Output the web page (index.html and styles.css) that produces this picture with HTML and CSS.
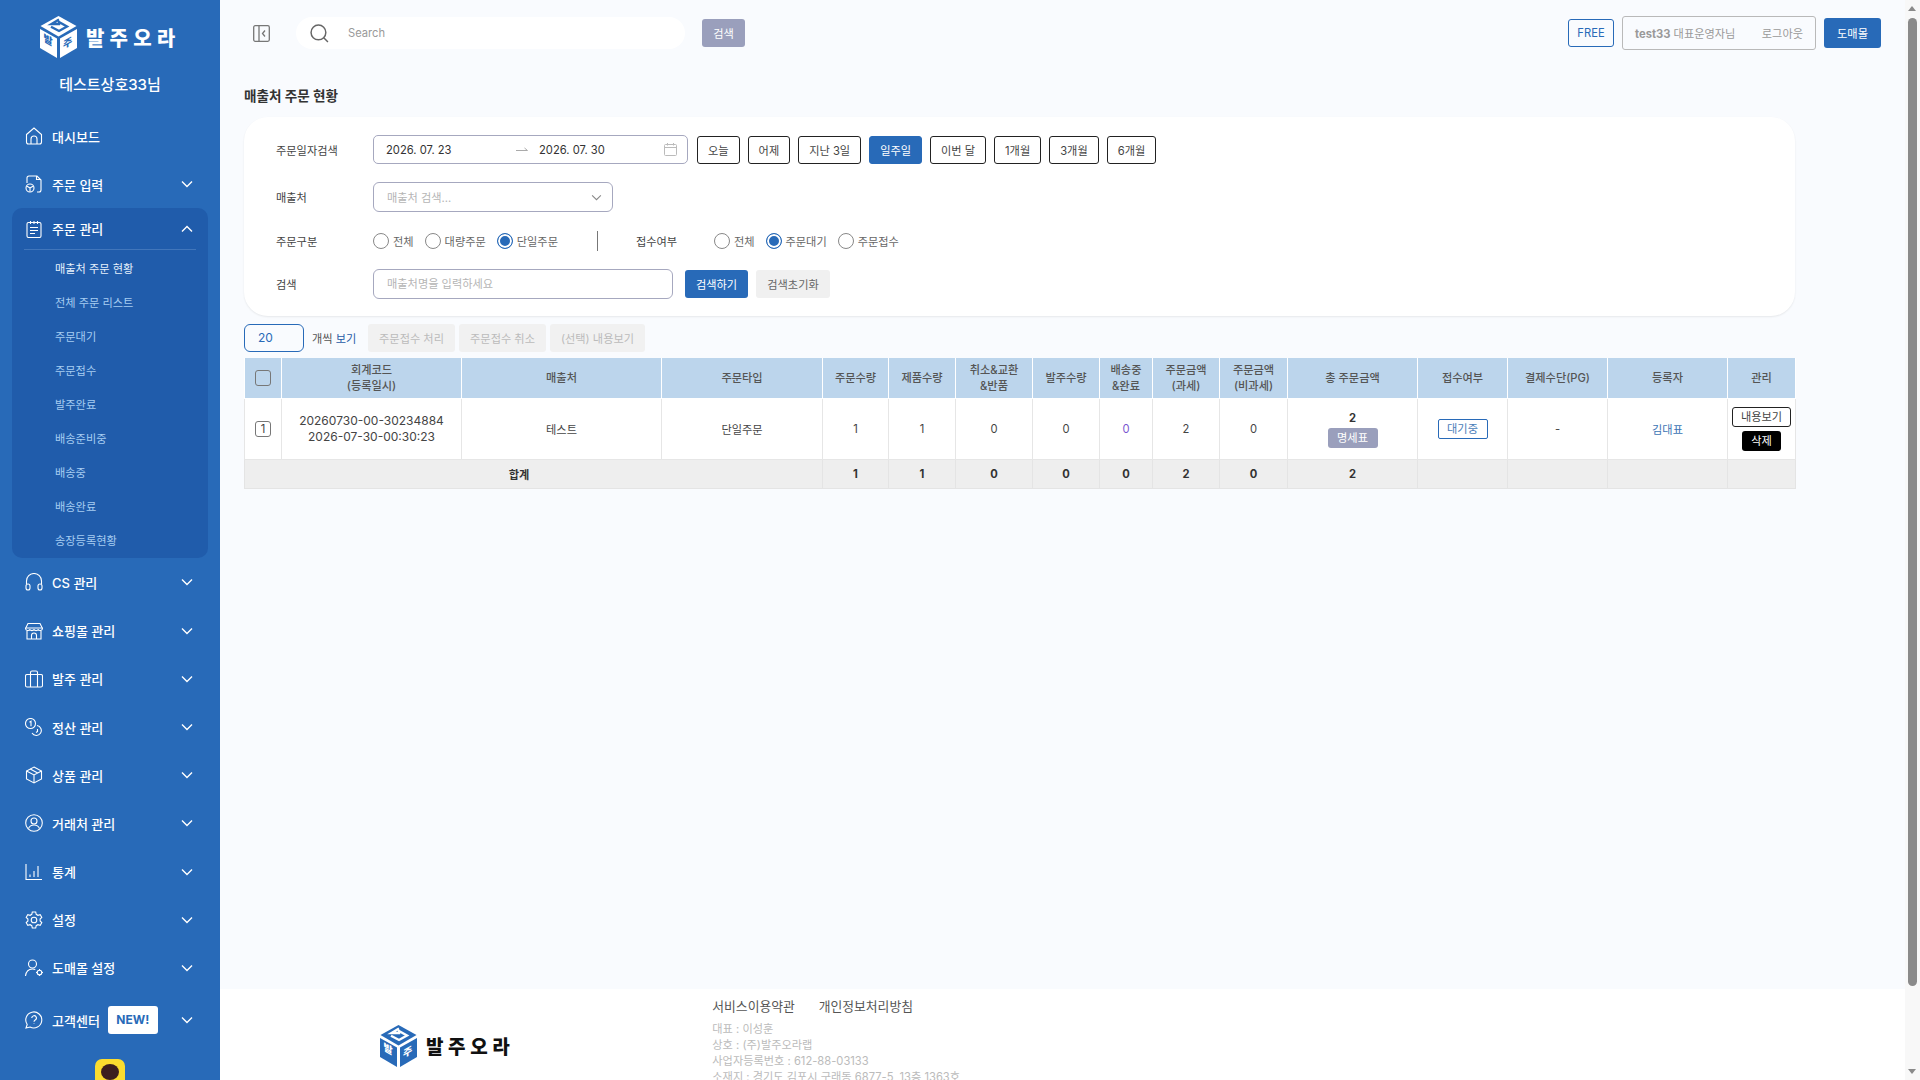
FILE: index.html
```html
<!DOCTYPE html>
<html lang="ko">
<head>
    <meta charset="UTF-8">
    <meta name="viewport" content="width=device-width, initial-scale=1.0">
    <title>매출처 주문 현황</title>
    <link rel="stylesheet" href="styles.css">
</head>
<body>
    <aside class="sidebar">
        <div class="brand">
            <svg class="cube" viewBox="0 0 37 42" width="37" height="42">
                <polygon class="cube-face" points="18.5,0 36.5,10 18.5,20.5 0.5,10"/>
                <path class="cube-cut" d="M19 3.5 L11.5 8 L19 8 L19 6 L27 10.5 L19 15 L11 10.8" fill="none" stroke-width="2.4"/>
                <polygon class="cube-face" points="0,13 17,22.5 17,42 0,32"/>
                <polygon class="cube-face" points="20,22.5 37,13 37,32 20,42"/>
                <text class="cube-text" transform="matrix(1 .56 0 1 3.5 25)" font-size="10">발</text>
                <text class="cube-text" transform="matrix(1 -.56 0 1 23 33)" font-size="10">주</text>
            </svg>
            <span class="brand-name">발주오라</span>
        </div>
        <div class="company">테스트상호33님</div>

        <nav class="menu">
            <a class="menu-item">
                <svg class="ico" viewBox="0 0 18 18"><path d="M1.5 7.5 9 1l7.5 6.5V15a2 2 0 0 1-2 2h-11a2 2 0 0 1-2-2z"/><path d="M6 17v-5a3 3 0 0 1 6 0v5"/></svg>
                <span>대시보드</span>
            </a>
            <a class="menu-item">
                <svg class="ico" viewBox="0 0 18 18"><path d="M2 8V3a2 2 0 0 1 2-2h8l4 4v10a2 2 0 0 1-2 2h-2"/><path d="M11.5 1v3.5H16"/><circle cx="5" cy="13" r="4"/><path d="M5 13v3.8M5 13l-3.3-2M5 13l3.3-2"/></svg>
                <span>주문 입력</span>
                <svg class="chev" viewBox="0 0 12 8"><path d="M1 1.5 6 6.500l5-5"/></svg>
            </a>
            <div class="menu-open">
                <a class="menu-item">
                    <svg class="ico" viewBox="0 0 18 18"><rect x="2" y="2.500" width="14" height="15" rx="1.500"/><path d="M5.500 1v3M9 1v3M12.500 1v3M5 7.500h8M5 10.500h8M5 13.500h5"/></svg>
                    <span>주문 관리</span>
                    <svg class="chev" viewBox="0 0 12 8"><path d="M1 6.500 6 1.500l5 5"/></svg>
                </a>
                <ul class="submenu">
                    <li class="active">매출처 주문 현황</li>
                    <li>전체 주문 리스트</li>
                    <li>주문대기</li>
                    <li>주문접수</li>
                    <li>발주완료</li>
                    <li>배송준비중</li>
                    <li>배송중</li>
                    <li>배송완료</li>
                    <li>송장등록현황</li>
                </ul>
            </div>
            <a class="menu-item">
                <svg class="ico" viewBox="0 0 18 18"><path d="M1.500 11V8a7.500 7.500 0 0 1 15 0v3"/><rect x="1" y="11" width="4" height="6" rx="2"/><rect x="13" y="11" width="4" height="6" rx="2"/></svg>
                <span>CS 관리</span>
                <svg class="chev" viewBox="0 0 12 8"><path d="M1 1.500 6 6.500l5-5"/></svg>
            </a>
            <a class="menu-item">
                <svg class="ico" viewBox="0 0 18 18"><path d="M3 1.500h12l2.500 5a2.500 2.500 0 0 1-4.300 1.200 2.800 2.800 0 0 1-4.200 0 2.800 2.800 0 0 1-4.200 0A2.500 2.500 0 0 1 .500 6.500z"/><path d="M2 9v8h14V9M.500 6h17M6.500 17v-3.500a2.500 2.500 0 0 1 5 0V17"/></svg>
                <span>쇼핑몰 관리</span>
                <svg class="chev" viewBox="0 0 12 8"><path d="M1 1.500 6 6.500l5-5"/></svg>
            </a>
            <a class="menu-item">
                <svg class="ico" viewBox="0 0 18 18"><rect x=".5" y="4.500" width="17" height="12.500" rx="1.500"/><path d="M5.500 17V2.500a1.500 1.500 0 0 1 1.500-1.500h4a1.500 1.500 0 0 1 1.500 1.500V17"/></svg>
                <span>발주 관리</span>
                <svg class="chev" viewBox="0 0 12 8"><path d="M1 1.500 6 6.500l5-5"/></svg>
            </a>
            <a class="menu-item">
                <svg class="ico" viewBox="0 0 18 18"><circle cx="5.500" cy="5.500" r="5"/><path d="M4.500 4.200 6 3.200v5M12 7.500a5 5 0 1 1-5 7.500"/><path d="M12.500 11v2.500l-1.500 1"/></svg>
                <span>정산 관리</span>
                <svg class="chev" viewBox="0 0 12 8"><path d="M1 1.500 6 6.500l5-5"/></svg>
            </a>
            <a class="menu-item">
                <svg class="ico" viewBox="0 0 18 18"><path d="M9 1l7.500 4v8L9 17l-7.500-4V5z"/><path d="M1.500 5 9 9l7.500-4M9 9v8M5.200 3l7.500 4"/></svg>
                <span>상품 관리</span>
                <svg class="chev" viewBox="0 0 12 8"><path d="M1 1.500 6 6.500l5-5"/></svg>
            </a>
            <a class="menu-item">
                <svg class="ico" viewBox="0 0 18 18"><circle cx="9" cy="9" r="8.300"/><circle cx="9" cy="7" r="3"/><path d="M3.500 14.500c1-2.500 3-3.500 5.500-3.500s4.500 1 5.500 3.500"/></svg>
                <span>거래처 관리</span>
                <svg class="chev" viewBox="0 0 12 8"><path d="M1 1.500 6 6.500l5-5"/></svg>
            </a>
            <a class="menu-item">
                <svg class="ico" viewBox="0 0 18 18"><path d="M1 1v15.500h16M5 14v-2.500M9 14V8M13 14V3"/></svg>
                <span>통계</span>
                <svg class="chev" viewBox="0 0 12 8"><path d="M1 1.500 6 6.500l5-5"/></svg>
            </a>
            <a class="menu-item">
                <svg class="ico" viewBox="0 0 18 18"><circle cx="9" cy="9" r="2.800"/><path d="M7.300 1h3.400l.5 2.300 1.700 1 2.300-.7 1.600 2.900-1.700 1.600v1.800l1.700 1.600-1.600 2.900-2.300-.7-1.700 1-.5 2.300H7.300l-.5-2.300-1.700-1-2.300.7-1.600-2.900 1.700-1.600V8.100L1.200 6.500l1.600-2.900 2.300.7 1.700-1z"/></svg>
                <span>설정</span>
                <svg class="chev" viewBox="0 0 12 8"><path d="M1 1.500 6 6.500l5-5"/></svg>
            </a>
            <a class="menu-item">
                <svg class="ico" viewBox="0 0 18 18"><circle cx="7.500" cy="5" r="4"/><path d="M.500 17c.5-4 3-7 7-7 1 0 2 .2 2.800.5"/><circle cx="14.500" cy="13.500" r="2.300"/><path d="M14.500 10v1.200M14.500 15.800V17M11 13.500h1.200M16.800 13.500H18"/></svg>
                <span>도매몰 설정</span>
                <svg class="chev" viewBox="0 0 12 8"><path d="M1 1.500 6 6.500l5-5"/></svg>
            </a>
            <a class="menu-item help">
                <svg class="ico" viewBox="0 0 18 18"><path d="M1 17l1.200-3.500A8 8 0 1 1 5 16z"/><path d="M6.800 7a2.300 2.300 0 1 1 3.400 2c-.8.500-1.200 1-1.200 1.800M9 12.600v.4"/></svg>
                <span>고객센터</span>
                <b class="new-badge">NEW!</b>
                <svg class="chev" viewBox="0 0 12 8"><path d="M1 1.500 6 6.500l5-5"/></svg>
            </a>
        </nav>
        <div class="kakao"><i></i></div>
    </aside>

    <div class="main">
        <header class="topbar">
            <svg class="panel-toggle" viewBox="0 0 17 17"><rect x=".7" y=".7" width="15.600" height="15.600" rx="1.500"/><path d="M6 1v15M12 5.500 9.500 8.500l2.500 3"/></svg>
            <div class="search-pill">
                <svg class="search-ico" viewBox="0 0 18 18"><circle cx="8" cy="8" r="7"/><path d="M13 13l4 4"/></svg>
                <span>Search</span>
            </div>
            <button class="btn-gray">검색</button>
            <div class="topbar-right">
                <span class="free-tag">FREE</span>
                <div class="user-box">
                    <span><b>test33</b> 대표운영자님</span>
                    <span>로그아웃</span>
                </div>
                <button class="btn-mall">도매몰</button>
            </div>
        </header>

        <section class="content">
            <h1 class="page-title">매출처 주문 현황</h1>

            <div class="filter-card">
                <div class="filter-row row-date">
                    <label class="filter-label">주문일자검색</label>
                    <div class="date-range">
                        <span class="date-from">2026. 07. 23</span>
                        <svg class="date-arrow" viewBox="0 0 12 5"><path d="M0 3.500h11.500L8.500 1"/></svg>
                        <span class="date-to">2026. 07. 30</span>
                        <svg class="cal-ico" viewBox="0 0 13 13"><rect x=".5" y="1.500" width="12" height="11" rx="1"/><path d="M.500 4.500h12M3.500 0v2.500M9.500 0v2.500"/></svg>
                    </div>
                    <div class="quick-dates">
                        <button>오늘</button>
                        <button>어제</button>
                        <button>지난 3일</button>
                        <button class="on">일주일</button>
                        <button>이번 달</button>
                        <button>1개월</button>
                        <button>3개월</button>
                        <button>6개월</button>
                    </div>
                </div>
                <div class="filter-row row-vendor">
                    <label class="filter-label">매출처</label>
                    <div class="vendor-select">
                        <span>매출처 검색...</span>
                        <svg viewBox="0 0 12 8"><path d="M1 1.500 6 6.500l5-5"/></svg>
                    </div>
                </div>
                <div class="filter-row row-radio">
                    <label class="filter-label">주문구분</label>
                    <div class="radio-group">
                        <span class="radio"><i></i>전체</span>
                        <span class="radio"><i></i>대량주문</span>
                        <span class="radio on"><i></i>단일주문</span>
                    </div>
                    <div class="radio-divider"></div>
                    <label class="filter-label second">접수여부</label>
                    <div class="radio-group">
                        <span class="radio"><i></i>전체</span>
                        <span class="radio on"><i></i>주문대기</span>
                        <span class="radio"><i></i>주문접수</span>
                    </div>
                </div>
                <div class="filter-row row-search">
                    <label class="filter-label">검색</label>
                    <div class="name-input">매출처명을 입력하세요</div>
                    <button class="btn-primary">검색하기</button>
                    <button class="btn-reset">검색초기화</button>
                </div>
            </div>

            <div class="toolbar">
                <div class="page-size">20</div>
                <span class="page-size-label">개씩 <em>보기</em></span>
                <button class="btn-disabled w1">주문접수 처리</button>
                <button class="btn-disabled w2">주문접수 취소</button>
                <button class="btn-disabled w3">(선택) 내용보기</button>
            </div>

            <table class="order-table">
                <colgroup>
                    <col class="c-check"><col class="c-code"><col class="c-vendor"><col class="c-type">
                    <col class="c-n1"><col class="c-n2"><col class="c-n3"><col class="c-n4"><col class="c-n5">
                    <col class="c-n6"><col class="c-n7"><col class="c-total"><col class="c-state">
                    <col class="c-pay"><col class="c-user"><col class="c-manage">
                </colgroup>
                <thead>
                    <tr>
                        <th><span class="check-box"></span></th>
                        <th>회계코드<br>(등록일시)</th>
                        <th>매출처</th>
                        <th>주문타입</th>
                        <th>주문수량</th>
                        <th>제품수량</th>
                        <th>취소&amp;교환<br>&amp;반품</th>
                        <th>발주수량</th>
                        <th>배송중<br>&amp;완료</th>
                        <th>주문금액<br>(과세)</th>
                        <th>주문금액<br>(비과세)</th>
                        <th>총 주문금액</th>
                        <th>접수여부</th>
                        <th>결제수단(PG)</th>
                        <th>등록자</th>
                        <th>관리</th>
                    </tr>
                </thead>
                <tbody>
                    <tr>
                        <td><span class="num-box">1</span></td>
                        <td class="code">20260730-00-30234884<br>2026-07-30-00:30:23</td>
                        <td>테스트</td>
                        <td>단일주문</td>
                        <td>1</td>
                        <td>1</td>
                        <td>0</td>
                        <td>0</td>
                        <td class="purple">0</td>
                        <td>2</td>
                        <td>0</td>
                        <td><b class="total-num">2</b><span class="tag-invoice">명세표</span></td>
                        <td><span class="tag-wait">대기중</span></td>
                        <td>-</td>
                        <td class="blue">김대표</td>
                        <td><span class="tag-view">내용보기</span><span class="tag-del">삭제</span></td>
                    </tr>
                </tbody>
                <tfoot>
                    <tr>
                        <td colspan="4" class="sum-label"><span>합계</span></td>
                        <td>1</td>
                        <td>1</td>
                        <td>0</td>
                        <td>0</td>
                        <td>0</td>
                        <td>2</td>
                        <td>0</td>
                        <td>2</td>
                        <td></td>
                        <td></td>
                        <td></td>
                        <td></td>
                    </tr>
                </tfoot>
            </table>
        </section>

        <footer class="footer">
            <div class="footer-logo">
                <svg class="cube" viewBox="0 0 37 42" width="37" height="42">
                    <polygon class="cube-face" points="18.5,0 36.5,10 18.5,20.5 0.5,10"/>
                    <path class="cube-cut" d="M19 3.5 L11.5 8 L19 8 L19 6 L27 10.5 L19 15 L11 10.8" fill="none" stroke-width="2.4"/>
                    <polygon class="cube-face" points="0,13 17,22.5 17,42 0,32"/>
                    <polygon class="cube-face" points="20,22.5 37,13 37,32 20,42"/>
                    <text class="cube-text" transform="matrix(1 .56 0 1 3.5 25)" font-size="10">발</text>
                    <text class="cube-text" transform="matrix(1 -.56 0 1 23 33)" font-size="10">주</text>
                </svg>
                <span class="brand-name">발주오라</span>
            </div>
            <div class="footer-info">
                <div class="footer-links"><span>서비스이용약관</span><span>개인정보처리방침</span></div>
                <p>대표 : 이성훈</p>
                <p>상호 : (주)발주오라랩</p>
                <p>사업자등록번호 : 612-88-03133</p>
                <p>소재지 : 경기도 김포시 구래동 6877-5, 13층 1363호</p>
            </div>
        </footer>
    </div>

    <div class="scrollbar">
        <span class="arrow-up"></span>
        <span class="thumb"></span>
        <span class="arrow-down"></span>
    </div>
</body>
</html>
```

FILE: styles.css
```css
* {
    box-sizing: border-box;
}
html, body {
    margin: 0;
    height: 1080px;
    overflow: hidden;
}
body {
    display: flex;
    font-family: Inter, "Noto Sans CJK KR", sans-serif;
    font-size: 11px;
    color: #333;
    background: #f9fbfe;
}
button {
    font-family: inherit;
    cursor: pointer;
}

/* sidebar */
.sidebar {
    width: 220px;
    flex: none;
    height: 1080px;
    overflow: hidden;
    background: #286ab8;
    color: #fff;
}
.brand {
    display: flex;
    align-items: center;
    gap: 9px;
    padding: 16px 0 0 40px;
}
.cube {
    flex: none;
}
.sidebar .cube-face {
    fill: #fff;
}
.sidebar .cube-cut {
    stroke: #286ab8;
}
.sidebar .cube-text {
    fill: #286ab8;
}
.cube-text {
    font-weight: 900;
}
.brand-name {
    font-size: 20px;
    font-weight: 900;
    letter-spacing: 5.2px;
    white-space: nowrap;
}
.company {
    margin-top: 16px;
    height: 22px;
    line-height: 22px;
    font-size: 15px;
    font-weight: 500;
    text-align: center;
}
.menu {
    margin-top: 16px;
}
.menu-item {
    display: flex;
    align-items: center;
    height: 48.2px;
    padding: 0 27px 0 25px;
    font-size: 13px;
    font-weight: 500;
}
.ico {
    width: 18px;
    height: 18px;
    margin-right: 9px;
    fill: none;
    stroke: #fff;
    stroke-width: 1.1;
    flex: none;
}
.chev {
    width: 12px;
    height: 8px;
    margin-left: auto;
    fill: none;
    stroke: #fff;
    stroke-width: 1.4;
}
.menu-open {
    margin: 0 12px;
    height: 350px;
    background: #205cab;
    border-radius: 10px;
}
.menu-open .menu-item {
    height: 41px;
    padding: 0 15px 0 13px;
}
.submenu {
    list-style: none;
    margin: 0 12px;
    padding: 2px 0 0 0;
    border-top: 1px solid #4176bb;
}
.submenu li {
    height: 34px;
    line-height: 34px;
    padding-left: 32px;
    margin-left: -1px;
    font-size: 11.2px;
    color: #a6cdf2;
}
.submenu li.active {
    color: #e6f1fc;
}
.menu-item.help {
    height: 56px;
}
.new-badge {
    width: 50px;
    height: 28px;
    margin-left: 8px;
    line-height: 28px;
    text-align: center;
    font-size: 12px;
    font-weight: 700;
    color: #286ab8;
    background: #fff;
    border-radius: 3px;
}
.kakao {
    width: 30px;
    height: 30px;
    margin: 11px 0 0 95px;
    padding-top: 5px;
    background: #fbdc2e;
    border-radius: 7px;
}
.kakao i {
    display: block;
    width: 18px;
    height: 16px;
    margin: 0 auto;
    background: #3c1e1e;
    border-radius: 50%;
}

/* top bar */
.main {
    flex: 1;
    min-width: 0;
    height: 1080px;
    display: flex;
    flex-direction: column;
}
.topbar {
    display: flex;
    align-items: center;
    height: 66px;
    padding: 0 24px 0 33px;
}
.panel-toggle {
    width: 17px;
    height: 17px;
    fill: none;
    stroke: #777;
    stroke-width: 1.3;
}
.search-pill {
    display: flex;
    align-items: center;
    width: 389px;
    height: 32px;
    margin-left: 26px;
    padding-left: 14px;
    background: #fff;
    border-radius: 16px;
    font-size: 11.2px;
    color: #9a9a9a;
}
.search-ico {
    width: 19px;
    height: 19px;
    margin-right: 19px;
    fill: none;
    stroke: #666;
    stroke-width: 1.4;
}
.btn-gray {
    width: 43px;
    height: 28px;
    margin-left: 17px;
    border: 0;
    border-radius: 3px;
    background: #9a9fbc;
    color: #fff;
    font-size: 11.2px;
}
.topbar-right {
    display: flex;
    align-items: center;
    margin-left: auto;
}
.free-tag {
    width: 46px;
    height: 28px;
    line-height: 26px;
    text-align: center;
    border: 1px solid #286ab8;
    border-radius: 3px;
    color: #286ab8;
    font-size: 11.2px;
}
.user-box {
    display: flex;
    justify-content: space-between;
    align-items: center;
    width: 194px;
    height: 34px;
    margin-left: 8px;
    padding: 0 12px 0 12px;
    border: 1px solid #b9b9b9;
    border-radius: 3px;
    color: #999;
    font-size: 11.2px;
}
.user-box b {
    font-weight: 700;
}
.btn-mall {
    width: 57px;
    height: 30px;
    margin-left: 8px;
    border: 0;
    border-radius: 3px;
    background: #286ab8;
    color: #fff;
    font-size: 11.2px;
}

/* content */
.content {
    flex: 1;
    padding: 0 110px 0 24px;
}
.page-title {
    margin: 21px 0 0;
    height: 18px;
    line-height: 18px;
    font-size: 13.6px;
    font-weight: 700;
    color: #333;
}
.filter-card {
    height: 199px;
    margin-top: 12px;
    padding: 18px 0 0 32px;
    background: #fff;
    border-radius: 24px;
    box-shadow: 0 1px 2px rgba(0, 0, 0, 0.08);
}
.filter-row {
    display: flex;
    align-items: center;
}
.filter-label {
    width: 97px;
    flex: none;
    font-size: 11.2px;
    color: #444;
}
.filter-label.second {
    width: 78px;
}
.row-vendor {
    margin-top: 18px;
}
.row-radio {
    margin-top: 19px;
    height: 20px;
}
.row-search {
    margin-top: 18px;
}
.date-range {
    display: flex;
    align-items: center;
    width: 315px;
    height: 29px;
    padding-left: 12px;
    border: 1px solid #a6a8bf;
    border-radius: 5px;
    font-size: 11.2px;
    color: #333;
}
.date-from {
    width: 130px;
}
.date-arrow {
    width: 12px;
    height: 5px;
    fill: none;
    stroke: #aaa;
    stroke-width: 1;
}
.date-to {
    margin-left: 11px;
    width: 125px;
}
.cal-ico {
    width: 13px;
    height: 13px;
    fill: none;
    stroke: #bbb;
    stroke-width: 1;
}
.quick-dates {
    display: flex;
    gap: 8px;
    margin-left: 9px;
}
.quick-dates button {
    height: 28px;
    padding: 0 10px;
    background: #fff;
    border: 1px solid #222;
    border-radius: 3px;
    font-size: 11.2px;
    color: #444;
}
.quick-dates button.on {
    background: #286ab8;
    border-color: #286ab8;
    color: #fff;
}
.vendor-select {
    display: flex;
    align-items: center;
    justify-content: space-between;
    width: 240px;
    height: 30px;
    padding: 0 10px 0 13px;
    border: 1px solid #a6a8bf;
    border-radius: 6px;
    font-size: 11.2px;
    color: #b5b5b5;
}
.vendor-select svg {
    width: 11px;
    height: 7px;
    fill: none;
    stroke: #888;
    stroke-width: 1.2;
}
.radio-group {
    display: flex;
    gap: 11px;
}
.radio {
    display: flex;
    align-items: center;
    gap: 4px;
    font-size: 11.2px;
    color: #666;
}
.radio i {
    width: 16px;
    height: 16px;
    border: 1px solid #888;
    border-radius: 50%;
}
.radio.on i {
    border-color: #286ab8;
    background: #286ab8;
    box-shadow: inset 0 0 0 2px #fff;
}
.radio-divider {
    width: 1px;
    height: 20px;
    margin: 0 38px 0 39px;
    background: #777;
}
.name-input {
    width: 300px;
    height: 30px;
    line-height: 28px;
    padding-left: 13px;
    border: 1px solid #a6a8bf;
    border-radius: 6px;
    font-size: 11.2px;
    color: #b5b5b5;
}
.btn-primary {
    width: 63px;
    height: 28px;
    margin-left: 12px;
    border: 0;
    border-radius: 3px;
    background: #286ab8;
    color: #fff;
    font-size: 11.2px;
}
.btn-reset {
    width: 74px;
    height: 28px;
    margin-left: 8px;
    border: 0;
    border-radius: 3px;
    background: #f0f0f0;
    color: #666;
    font-size: 11.2px;
}

/* toolbar */
.toolbar {
    display: flex;
    align-items: center;
    height: 28px;
    margin-top: 8px;
}
.page-size {
    width: 60px;
    height: 28px;
    line-height: 26px;
    padding-left: 13px;
    border: 1px solid #286ab8;
    border-radius: 6px;
    font-size: 12px;
    color: #286ab8;
}
.page-size-label {
    width: 56px;
    margin-left: 8px;
    font-size: 11.2px;
    color: #555;
}
.page-size-label em {
    font-style: normal;
    color: #1f5aa6;
}
.btn-disabled {
    height: 28px;
    margin-right: 4px;
    padding: 0;
    border: 0;
    border-radius: 3px;
    background: #f1f1f1;
    color: #bbb;
    font-size: 11.2px;
}
.w1, .w2 {
    width: 87px;
}
.w3 {
    width: 95px;
}

/* table */
.order-table {
    width: 1551px;
    margin-top: 6px;
    table-layout: fixed;
    border-collapse: collapse;
    font-size: 11.2px;
    text-align: center;
}
.c-check { width: 37px; }
.c-code { width: 180px; }
.c-vendor { width: 200px; }
.c-type { width: 161px; }
.c-n1 { width: 66px; }
.c-n2 { width: 67px; }
.c-n3 { width: 77px; }
.c-n4 { width: 67px; }
.c-n5 { width: 53px; }
.c-n6 { width: 67px; }
.c-n7 { width: 68px; }
.c-total { width: 130px; }
.c-state { width: 90px; }
.c-pay { width: 100px; }
.c-user { width: 120px; }
.c-manage { width: 68px; }
.order-table th {
    height: 40px;
    padding: 0;
    background: #bcd5ec;
    border: 1px solid #fff;
    border-top: 0;
    font-weight: 500;
    line-height: 16px;
    color: #555;
}
.order-table tbody td {
    height: 61px;
    padding: 0;
    background: #fff;
    border: 1px solid #e6e6e6;
    border-top: 0;
    color: #444;
}
.order-table tfoot td {
    height: 29px;
    padding: 0;
    background: #eee;
    border: 1px solid #e4e4e4;
    border-top: 0;
    font-weight: 700;
    color: #333;
}
.sum-label span {
    margin-left: -29px;
}
.order-table td.code {
    font-size: 12px;
    line-height: 16px;
}
.check-box {
    display: block;
    width: 16px;
    height: 16px;
    margin: 0 auto;
    background: #bcd5ec;
    border: 1px solid #777;
    border-radius: 3px;
}
.num-box {
    display: block;
    width: 16px;
    height: 16px;
    margin: 0 auto;
    line-height: 14px;
    border: 1px solid #777;
    border-radius: 3px;
}
.purple {
    color: #7a55d0 !important;
}
.blue {
    color: #3c74b4 !important;
}
.total-num {
    display: block;
    color: #333;
    line-height: 16px;
}
.tag-invoice {
    display: block;
    width: 50px;
    height: 20px;
    margin: 2px auto 0;
    line-height: 20px;
    background: #9a9fbc;
    border-radius: 3px;
    color: #fff;
}
.tag-wait {
    display: block;
    width: 50px;
    height: 20px;
    margin: 0 auto;
    line-height: 18px;
    border: 1px solid #286ab8;
    border-radius: 2px;
    color: #4a7db8;
}
.tag-view {
    display: block;
    width: 59px;
    height: 20px;
    margin: 0 auto;
    line-height: 18px;
    border: 1px solid #222;
    border-radius: 3px;
}
.tag-del {
    display: block;
    width: 39px;
    height: 20px;
    margin: 4px auto 0;
    line-height: 20px;
    background: #000;
    border-radius: 3px;
    color: #fff;
}

/* footer */
.footer {
    display: flex;
    height: 91px;
    flex: none;
    overflow: hidden;
    background: #fff;
}
.footer-logo {
    display: flex;
    align-items: center;
    gap: 9px;
    height: 41px;
    margin: 36px 0 0 160px;
    color: #111;
}
.footer-logo .cube-face {
    fill: #286ab8;
}
.footer-logo .cube-cut {
    stroke: #fff;
}
.footer-logo .cube-text {
    fill: #fff;
}
.footer-logo .brand-name {
    font-size: 19px;
    letter-spacing: 4.6px;
}
.footer-info {
    margin-left: 198px;
    padding-top: 8px;
    color: #bbb;
    font-size: 11.2px;
}
.footer-links {
    display: flex;
    gap: 24px;
    height: 20px;
    line-height: 20px;
    margin-bottom: 4px;
    font-size: 12.8px;
    color: #555;
}
.footer-info p {
    margin: 0;
    height: 16px;
    line-height: 16px;
}

/* scrollbar */
.scrollbar {
    position: relative;
    width: 15px;
    flex: none;
    height: 1080px;
    background: #f8f8f8;
}
.thumb {
    position: absolute;
    left: 3px;
    top: 18px;
    width: 9px;
    height: 968px;
    background: #8a8a8a;
    border-radius: 5px;
}
.arrow-up, .arrow-down {
    position: absolute;
    left: 3px;
    width: 0;
    height: 0;
    border-left: 4.5px solid transparent;
    border-right: 4.5px solid transparent;
}
.arrow-up {
    top: 6px;
    border-bottom: 5px solid #8a8a8a;
}
.arrow-down {
    bottom: 6px;
    border-top: 5px solid #8a8a8a;
}
```
